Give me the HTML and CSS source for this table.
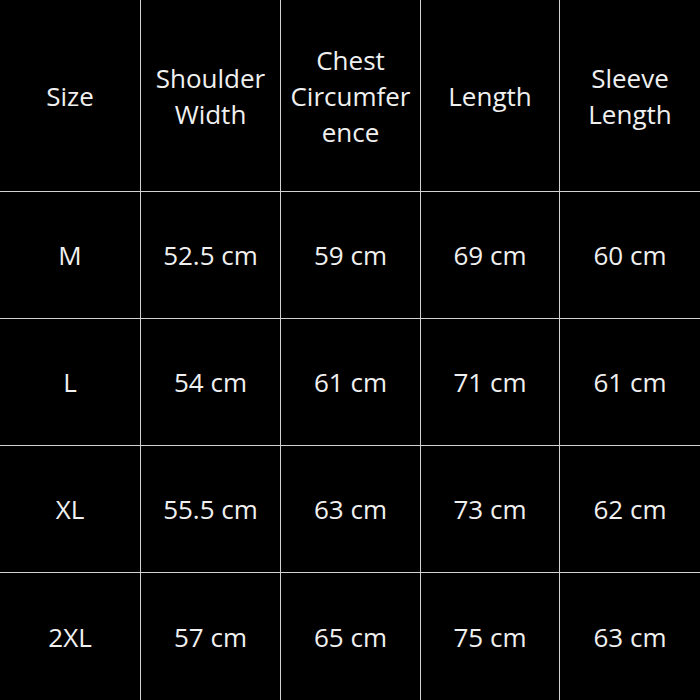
FILE: index.html
```html
<!DOCTYPE html>
<html>
<head>
<meta charset="utf-8">
<link rel="stylesheet" href="styles.css">
</head>
<body>
<div class="chart">
  <div class="cell">Size</div>
  <div class="cell">Shoulder Width</div>
  <div class="cell">Chest Circumference</div>
  <div class="cell">Length</div>
  <div class="cell">Sleeve Length</div>

  <div class="cell">M</div>
  <div class="cell">52.5 cm</div>
  <div class="cell">59 cm</div>
  <div class="cell">69 cm</div>
  <div class="cell">60 cm</div>

  <div class="cell">L</div>
  <div class="cell">54 cm</div>
  <div class="cell">61 cm</div>
  <div class="cell">71 cm</div>
  <div class="cell">61 cm</div>

  <div class="cell">XL</div>
  <div class="cell">55.5 cm</div>
  <div class="cell">63 cm</div>
  <div class="cell">73 cm</div>
  <div class="cell">62 cm</div>

  <div class="cell">2XL</div>
  <div class="cell">57 cm</div>
  <div class="cell">65 cm</div>
  <div class="cell">75 cm</div>
  <div class="cell">63 cm</div>
</div>
</body>
</html>
```
FILE: styles.css
```css
html, body {
  margin: 0;
  padding: 0;
  background: #000;
}
.chart {
  width: 700px;
  height: 700px;
  display: grid;
  grid-template-columns: 140px 139px 139px 138px 140px;
  grid-template-rows: 191px 126px 126px 126px 127px;
  gap: 1px;
  background: #d2d2d2;
  font-family: "Open Sans", "Liberation Sans", sans-serif;
  font-size: 26px;
  color: #f0f0f0;
}
.cell {
  background: #000;
  display: flex;
  align-items: center;
  justify-content: center;
  text-align: center;
  padding: 0 8px;
  overflow-wrap: anywhere;
  min-width: 0;
}
```
